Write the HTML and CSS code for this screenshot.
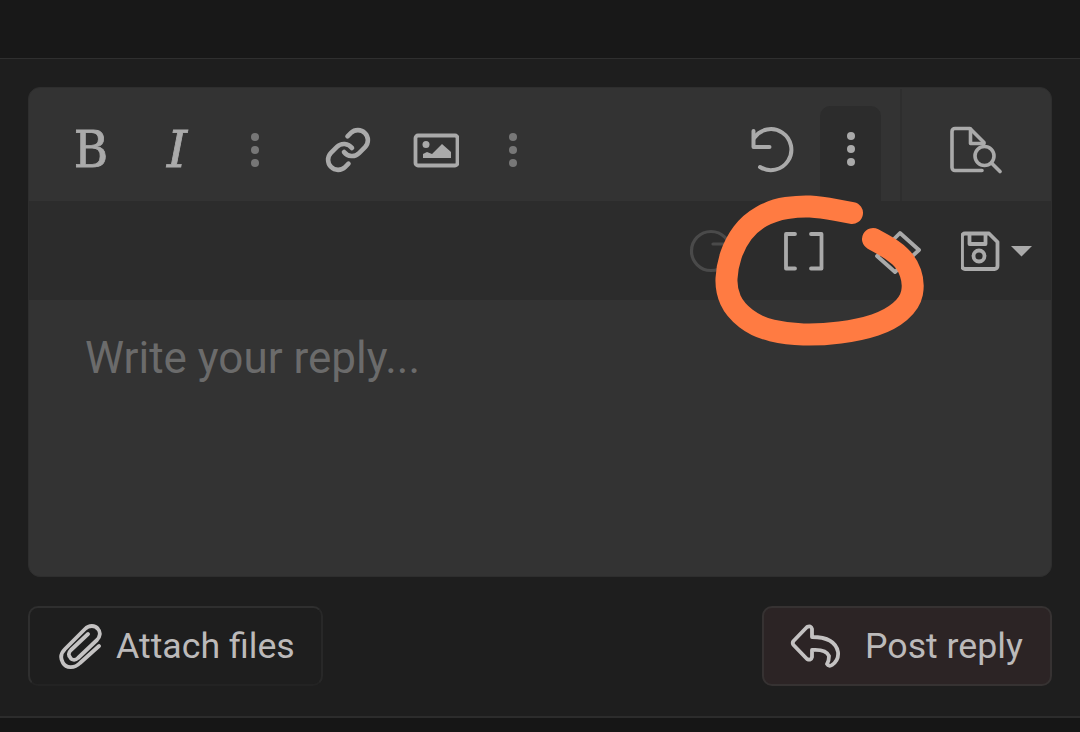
FILE: index.html
```html
<!DOCTYPE html>
<html lang="en">
<head>
    <meta charset="UTF-8">
    <title>Write your reply</title>
    <link rel="stylesheet" href="styles.css">
</head>
<body>
    <div class="topbar"></div>

    <main class="content">
        <div class="editor">
            <div class="toolbar">
                <button class="tool tool-b">B</button>
                <button class="tool tool-i">I</button>
                <button class="tool gap-dots">
                    <svg class="icon dim" width="60" height="44" viewBox="225 127 60 44"><circle cx="255" cy="136" r="4"/><circle cx="255" cy="149" r="4"/><circle cx="255" cy="162" r="4"/></svg>
                </button>
                <button class="tool gap-link">
                    <svg class="icon line" width="48" height="48" viewBox="0 0 24 24" stroke-width="2.3"><path d="M10 13a5 5 0 0 0 7.54.54l3-3a5 5 0 0 0-7.07-7.07l-1.72 1.71"/><path d="M14 11a5 5 0 0 0-7.54-.54l-3 3a5 5 0 0 0 7.07 7.07l1.71-1.71"/></svg>
                </button>
                <button class="tool gap-image">
                    <svg class="icon" width="46" height="36" viewBox="413 131 46 36"><rect class="outline" x="415.500" y="134.500" width="42" height="30" rx="2.500"/><circle cx="426" cy="143.500" r="3.500"/><path d="M423 153l4-2 5 2 10-10 9 8v6h-28z"/></svg>
                </button>
                <button class="tool gap-dots-small">
                    <svg class="icon dim" width="60" height="44" viewBox="483 127 60 44"><circle cx="513" cy="136" r="4"/><circle cx="513" cy="149" r="4"/><circle cx="513" cy="162" r="4"/></svg>
                </button>

                <button class="tool tool-undo">
                    <svg class="icon line" width="48" height="48" viewBox="749 125 48 48" stroke-width="4"><path d="M760 166a20.500 20.500 0 1 0-6-29"/><path d="M753.500 130v16h16"/></svg>
                </button>
                <button class="tool tool-more">
                    <svg class="icon" width="60" height="44" viewBox="820 127 60 44"><circle cx="850" cy="136" r="4"/><circle cx="850" cy="149" r="4"/><circle cx="850" cy="162" r="4"/></svg>
                </button>
                <div class="preview">
                    <svg class="icon line" width="54" height="48" viewBox="950 125 54 48" stroke-width="3.600"><path d="M982 169.500h-27a3 3 0 0 1-3-3v-36a3 3 0 0 1 3-3h15l14 14v1"/><path d="M970.500 128v14.500h13"/><circle cx="984.500" cy="155" r="9.500"/><path d="M991.500 162l8.500 8.500"/></svg>
                </div>
            </div>

            <div class="toolbar-second">
                <button class="tool">
                    <svg class="icon line faint" width="48" height="48" viewBox="686 228 48 48" stroke-width="3.200"><circle cx="710" cy="252" r="19.500"/><path d="M712 245h16"/></svg>
                </button>
                <button class="tool gap-wide">
                    <svg class="icon line" width="44" height="44" viewBox="782 230 44 44" stroke-width="3.800"><path d="M795 235h-9v34.500h9"/><path d="M811 235h10.500v34.500h-10.500"/></svg>
                </button>
                <button class="tool gap-wide">
                    <svg class="icon line" width="48" height="48" viewBox="873 228 48 48" stroke-width="3.800"><path d="M877 257l23-23 19 17-24 22z"/></svg>
                </button>
                <button class="tool-save">
                    <svg class="icon" width="72" height="44" viewBox="961 230 72 44"><path class="outline" d="M965 234.500h24l8.500 8.500v24a3 3 0 0 1-3 3h-29.500a3 3 0 0 1-3-3v-29.500a3 3 0 0 1 3-3z"/><path class="outline" d="M969.500 235v10h16v-10"/><circle class="outline" cx="979" cy="257" r="5.500"/><path d="M1011 247h21l-10.500 10.500z"/></svg>
                </button>
            </div>

            <div class="write-area">Write your reply...</div>
        </div>

        <div class="actions">
            <button class="btn btn-attach">
                <svg class="icon line bright" width="44" height="48" viewBox="57 622 44 48" stroke-width="3.800"><path d="M97 646L78 663c-6 6-14 5-17 0-3-5-2-10 2-14l20-20c4-4 10-4 13 0 3 3 2 8-1 11l-19 18c-3 3-7 2-8-1-2-2-1-5 1-7l17-16"/></svg>
                <span>Attach files</span>
            </button>
            <button class="btn btn-reply">
                <svg class="icon line bright" width="52" height="46" viewBox="790 624 52 46" stroke-width="3.800"><path d="M807 628l-13.500 14q-1.500 2 0 4l13.500 14q4 2 5-2v-7q14-1 17 6 0 5-2 8 2 3 5 1 7-5 6-13-3-15-26-15v-8q-1-4-5-2z"/></svg>
                <span>Post reply</span>
            </button>
        </div>
    </main>

    <div class="bottombar"></div>

    <!-- Handschrift-Markierung ueber dem Editor -->
    <svg class="scribble" width="1080" height="732" viewBox="0 0 1080 732">
        <path d="M852 213L836 210Q820 207 810 206.500Q800 206 786.500 208Q773 210 761.500 216.500Q750 223 742.500 233Q735 243 731 255Q727 267 726.500 278.500Q726 290 730.500 300Q735 310 746 318.500Q757 327 772 330.500Q787 334 803.500 334.500Q820 335 840 332.500Q860 330 875 325Q890 320 900 311.500Q910 303 912 293Q914 283 910.500 273Q907 263 900 256.500Q893 250 883 244.500L873 239"/>
    </svg>
</body>
</html>
```

FILE: styles.css
```css
* {
    box-sizing: border-box;
}

body {
    position: relative;
    margin: 0;
    height: 732px;
    overflow: hidden;
    font-family: Roboto, "Liberation Sans", sans-serif;
    background-color: #161616;
}

button {
    padding: 0;
    border: none;
    background: none;
    font-family: inherit;
}

.topbar {
    height: 59px;
    background-color: #181818;
    border-bottom: 1px solid #2f2f2f;
}

.content {
    height: 657px;
    padding: 28px 28px 0 28px;
    background-color: #1e1e1e;
}

.bottombar {
    height: 16px;
    background-color: #161616;
    border-top: 2px solid #2c2c2c;
}

/* Editor */
.editor {
    height: 490px;
    border: 1px solid #2e2e2e;
    border-radius: 12px;
    background-color: #333333;
    overflow: hidden;
}

.toolbar {
    display: flex;
    align-items: center;
    height: 113px;
    padding: 10px 0 0 32px;
}

.toolbar-second {
    display: flex;
    align-items: center;
    justify-content: flex-end;
    height: 99px;
    padding-right: 18px;
    background-color: #2c2c2c;
}

.tool {
    display: flex;
    align-items: center;
    justify-content: center;
    width: 60px;
    height: 60px;
    color: #aaaaaa;
}

.tool-b {
    font-family: "DejaVu Serif", serif;
    font-size: 51px;
    transform: scaleX(0.92);
    -webkit-text-stroke: 0.8px #aaaaaa;
}

.tool-i {
    margin-left: 26px;
    font-family: "DejaVu Serif", serif;
    font-style: italic;
    font-size: 51px;
    -webkit-text-stroke: 0.8px #aaaaaa;
}

.gap-dots {
    margin-left: 18px;
}

.gap-link {
    margin-left: 33px;
}

.gap-image {
    margin-left: 28px;
}

.gap-dots-small {
    margin-left: 17px;
}

.gap-wide {
    margin-left: 33px;
}

.tool-undo {
    margin-left: 200px;
}

.tool-more {
    align-self: flex-end;
    width: 61px;
    height: 95px;
    margin-left: 17px;
    padding-bottom: 9px;
    border-radius: 10px 10px 0 0;
    background-color: #2c2c2c;
}

.preview {
    display: flex;
    align-items: center;
    justify-content: center;
    align-self: flex-end;
    width: 151px;
    height: 112px;
    margin-left: 19px;
    padding: 10px 0 0 0;
    border-left: 2px solid #2e2e2e;
}

.tool-save {
    display: flex;
    margin-left: 34px;
}

.icon {
    display: block;
    fill: #aaaaaa;
}

.icon.dim {
    fill: #777777;
}

.icon .outline {
    fill: none;
    stroke: #aaaaaa;
    stroke-width: 3.8;
    stroke-linejoin: round;
}

.icon.line {
    fill: none;
    stroke: #aaaaaa;
    stroke-linecap: round;
    stroke-linejoin: round;
}

.icon.faint {
    stroke: #4a4a4a;
}

.icon.bright {
    stroke: #c4c2c2;
}

.write-area {
    padding: 35px 0 0 56px;
    font-size: 44px;
    line-height: 46px;
    color: #6b6b6b;
}

/* Buttons */
.actions {
    display: flex;
    justify-content: space-between;
    margin-top: 29px;
}

.btn {
    display: flex;
    align-items: center;
    height: 80px;
    border-radius: 10px;
    font-size: 35.7px;
    color: #bcbaba;
}

.btn-attach {
    width: 295px;
    padding-left: 29px;
    gap: 13px;
    border: 2px solid #2f2f2f;
    border-bottom-color: #232323;
    border-right-color: #282828;
}

.btn-reply {
    width: 290px;
    padding-left: 26px;
    gap: 23px;
    border: 2px solid #363232;
    background-color: #2c2425;
}

.scribble {
    position: absolute;
    top: 0;
    left: 0;
    fill: none;
    stroke: #ff7b42;
    stroke-width: 22;
    stroke-linecap: round;
    stroke-linejoin: round;
}
```
